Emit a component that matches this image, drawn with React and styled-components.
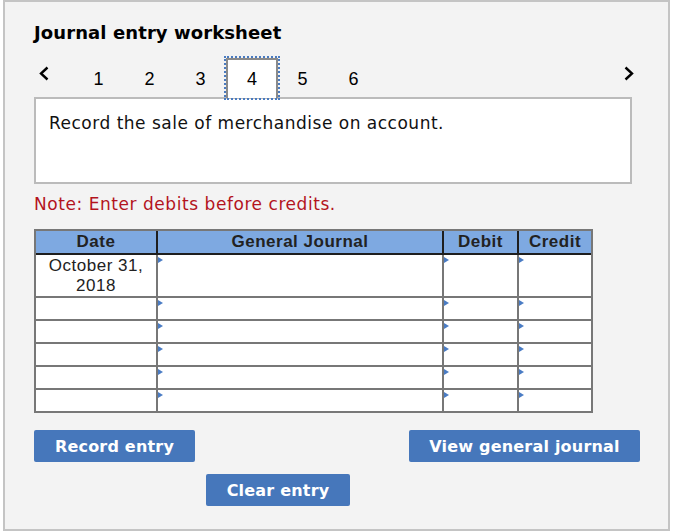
import React from 'react';
import styled, {createGlobalStyle} from 'styled-components';

const GlobalStyle = createGlobalStyle`
  body {
    margin: 0;
    background: #ffffff;
  }
`;

const FrameStyled = styled.div`
  box-sizing: border-box;
  width: 667px;
  height: 531px;
  margin-left: 3px;
  padding: 20px 0 0 29px;
  border: 2px solid #c4c4c4;
  background: #f3f3f3;
  font-family: "DejaVu Sans", Verdana, sans-serif;
  color: #111;
`;

const Title = styled.h1`
  margin: 0;
  font-size: 18px;
  line-height: 22px;
  font-weight: bold;
  letter-spacing: 0.1px;
  color: #000;
`;

const NavRow = styled.div`
  display: flex;
  align-items: flex-start;
  height: 40px;
  margin-top: 14px;
  width: 606px;
`;

const ArrowButton = styled.div`
  width: ${props => props.$width}px;
  margin-left: ${props => props.$offset || 0}px;
  padding-top: 8px;
  padding-left: ${props => props.$pad || 0}px;
  box-sizing: border-box;
  display: flex;
  svg {
    display: block;
  }
`;

const Tab = styled.div`
  position: relative;
  z-index: 1;
  box-sizing: border-box;
  width: ${props => props.$active ? 52 : 51}px;
  margin-right: ${props => props.$active ? -1 : 0}px;
  height: 40px;
  display: flex;
  align-items: center;
  justify-content: center;
  font-family: "Liberation Sans", Arial, sans-serif;
  font-size: 18px;
  color: #000;
  background: ${props => props.$active ? '#ffffff' : 'transparent'};
  border: ${props => props.$active ? '2px solid #8a8a8a' : 'none'};
  border-bottom: none;
  outline: ${props => props.$active ? '2px dotted #4a7bc0' : 'none'};
  padding-top: ${props => props.$active ? 0 : 2}px;
`;

const PromptBox = styled.div`
  box-sizing: border-box;
  width: 598px;
  height: 87px;
  margin-top: -1px;
  padding: 14px 13px 0;
  border: 2px solid #bbbbbb;
  background: #ffffff;
  font-size: 17px;
  line-height: 20px;
  letter-spacing: 0.5px;
  color: #111;
`;

const Note = styled.p`
  margin: 10px 0 0;
  font-size: 17px;
  line-height: 20px;
  letter-spacing: 0.55px;
  color: #b3141d;
`;

const JournalTable = styled.table`
  margin-top: 15px;
  border-collapse: separate;
  border-spacing: 0;
  border: 2px solid #777777;
  background: #ffffff;
  font-family: "Liberation Sans", Arial, sans-serif;
  table-layout: fixed;
`;

const HeadCell = styled.th`
  box-sizing: content-box;
  width: ${props => props.$width}px;
  height: 22px;
  padding: 0;
  background: #7ea9e1;
  border-bottom: 2px solid #1e1e1e;
  border-left: ${props => props.$first ? 'none' : '2px solid #1e1e1e'};
  font-size: 17px;
  line-height: 22px;
  font-weight: bold;
  letter-spacing: 0.5px;
  color: #222;
  text-align: center;
`;

const Cell = styled.td`
  height: ${props => props.$tall ? 41 : 21}px;
  padding: 0;
  vertical-align: top;
  border-top: ${props => props.$firstRow ? 'none' : '2px solid #777777'};
  border-left: ${props => props.$first ? 'none' : '2px solid #777777'};
`;

const DateText = styled.div`
  padding-top: 1px;
  font-size: 17px;
  line-height: 20px;
  letter-spacing: 0.5px;
  color: #222;
  text-align: center;
`;

const Marker = styled.span`
  display: block;
  width: 0;
  height: 0;
  margin-top: 2px;
  border-top: 3px solid transparent;
  border-bottom: 3px solid transparent;
  border-left: 5px solid #4a7cc4;
`;

const ButtonRow = styled.div`
  display: flex;
  justify-content: space-between;
  width: 606px;
  margin-top: 17px;
`;

const ActionButton = styled.button`
  box-sizing: border-box;
  width: ${props => props.$width}px;
  height: 32px;
  margin-left: ${props => props.$offset || 0}px;
  padding: 0;
  border: none;
  border-radius: 2px;
  background: #4677bb;
  color: #ffffff;
  font-family: "DejaVu Sans", Verdana, sans-serif;
  font-size: 16px;
  font-weight: bold;
  letter-spacing: 0.2px;
  cursor: pointer;
`;

const ClearRow = styled.div`
  margin-top: 12px;
`;

const Chevron = ({dir}) => (
    <svg width="12" height="15" viewBox="0 0 12 15">
        <path
            d={dir === 'left' ? 'M9.5 1.5 L3 7.5 L9.5 13.5' : 'M2.5 1.5 L9 7.5 L2.5 13.5'}
            fill="none"
            stroke="#000"
            strokeWidth="2.4"
        />
    </svg>
);

const columns = [
    {title: 'Date', width: 120},
    {title: 'General Journal', width: 284},
    {title: 'Debit', width: 73},
    {title: 'Credit', width: 72},
];

const rows = [0, 1, 2, 3, 4, 5];

const App = () => {
    return (
        <>
            <GlobalStyle/>
            <FrameStyled>
                <Title>Journal entry worksheet</Title>
                <NavRow>
                    <ArrowButton $width={39} $pad={4}><Chevron dir="left"/></ArrowButton>
                    {[1, 2, 3, 4, 5, 6].map(n => (
                        <Tab key={n} $active={n === 4}>{n}</Tab>
                    ))}
                    <ArrowButton $width={12} $offset={244}><Chevron dir="right"/></ArrowButton>
                </NavRow>
                <PromptBox>Record the sale of merchandise on account.</PromptBox>
                <Note>Note: Enter debits before credits.</Note>
                <JournalTable>
                    <thead>
                        <tr>
                            {columns.map((col, i) => (
                                <HeadCell key={col.title} $width={col.width} $first={i === 0}>{col.title}</HeadCell>
                            ))}
                        </tr>
                    </thead>
                    <tbody>
                        {rows.map(r => (
                            <tr key={r}>
                                <Cell $first $firstRow={r === 0} $tall={r === 0}>
                                    {r === 0 && <DateText>October 31,<br/>2018</DateText>}
                                </Cell>
                                <Cell $firstRow={r === 0} $tall={r === 0}><Marker/></Cell>
                                <Cell $firstRow={r === 0} $tall={r === 0}><Marker/></Cell>
                                <Cell $firstRow={r === 0} $tall={r === 0}><Marker/></Cell>
                            </tr>
                        ))}
                    </tbody>
                </JournalTable>
                <ButtonRow>
                    <ActionButton $width={161}>Record entry</ActionButton>
                    <ActionButton $width={231}>View general journal</ActionButton>
                </ButtonRow>
                <ClearRow>
                    <ActionButton $width={144} $offset={172}>Clear entry</ActionButton>
                </ClearRow>
            </FrameStyled>
        </>
    );
};

export default App;
